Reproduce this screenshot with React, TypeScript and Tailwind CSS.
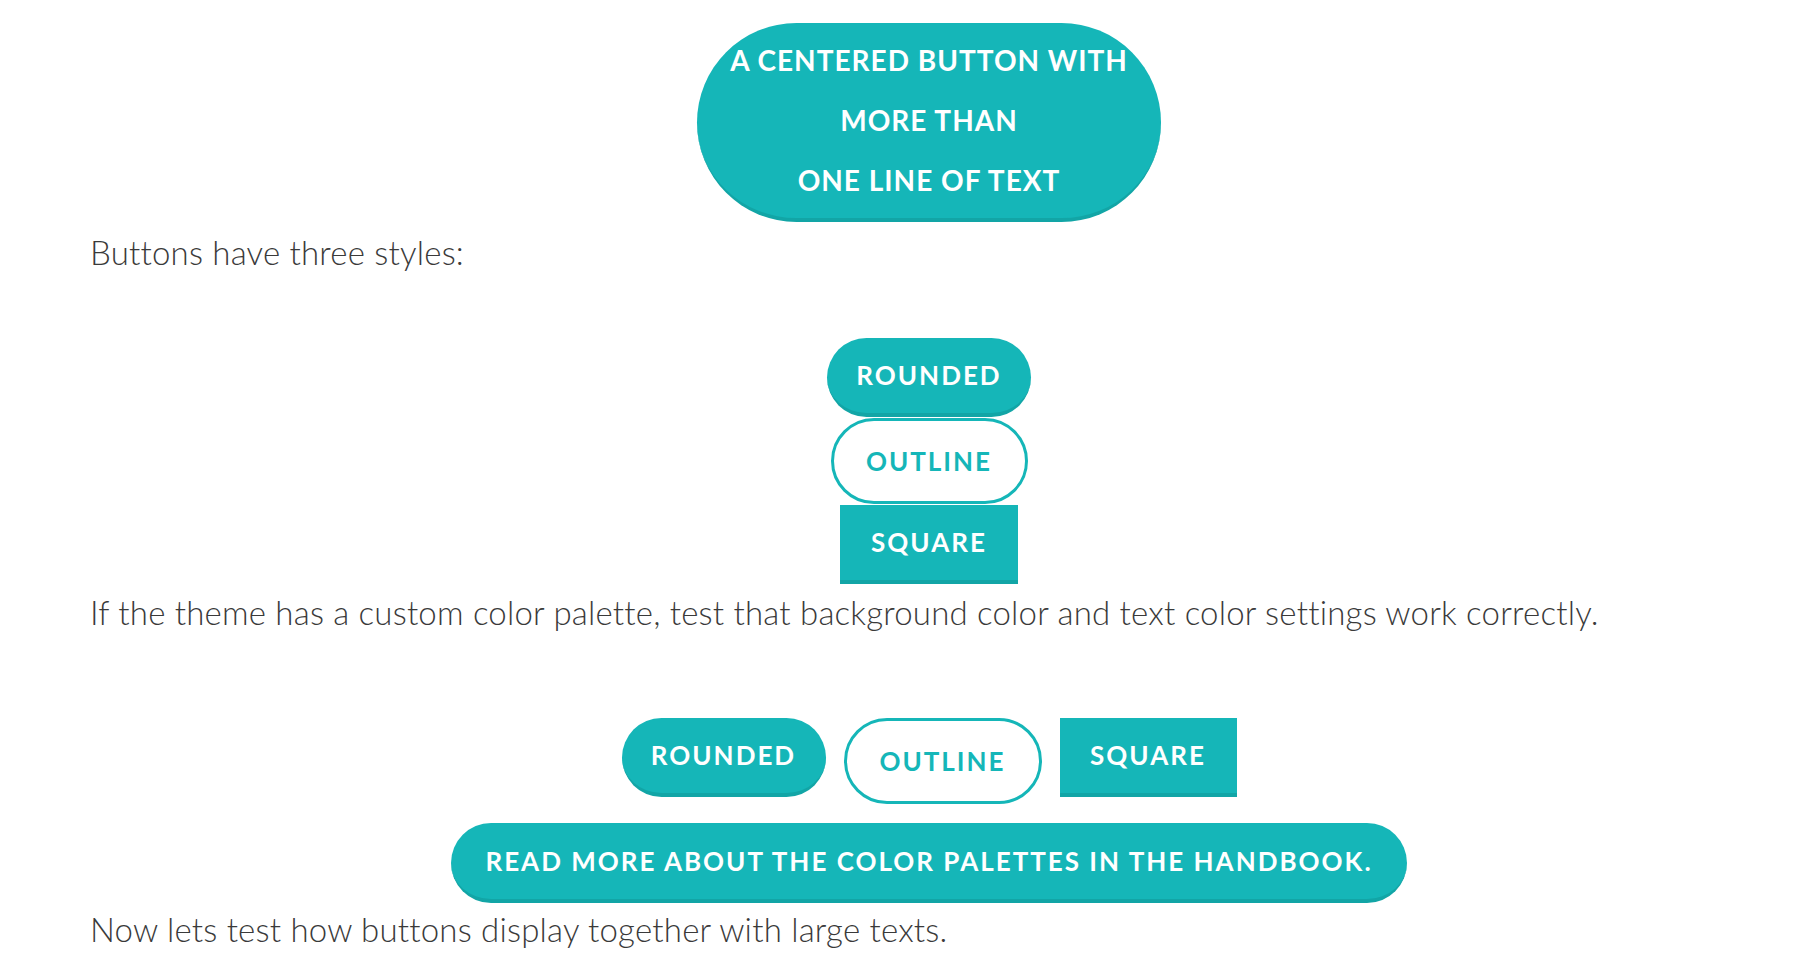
import React from "react"

const font = { fontFamily: '"Lato", "Liberation Sans", sans-serif' }

function Filled({ children, square, className = "" }: { children: React.ReactNode; square?: boolean; className?: string }) {
  return (
    <div
      className={`flex items-center justify-center bg-[#15b6b8] border-b-4 border-[#12a5a6] text-white font-bold text-[26px] tracking-[2px] ${square ? "" : "rounded-full"} ${className}`}
    >
      {children}
    </div>
  )
}

function Outline({ className = "" }: { className?: string }) {
  return (
    <div
      className={`flex items-center justify-center bg-white border-[3px] border-[#15b6b8] rounded-full text-[#15b6b8] font-bold text-[26px] tracking-[2px] ${className}`}
    >
      OUTLINE
    </div>
  )
}

export default function App() {
  return (
    <div className="min-h-[970px] bg-white pt-[23px] pl-[90px] pr-[38px] text-[#3a3a3a]" style={font}>
      <div className="flex justify-center">
        <div className="w-[464px] h-[199px] rounded-full bg-[#15b6b8] border-b-4 border-[#12a5a6] pt-[7px] text-white font-bold text-[28px] tracking-[1px] leading-[60px] text-center">
          <div>A CENTERED BUTTON WITH</div>
          <div>MORE THAN</div>
          <div>ONE LINE OF TEXT</div>
        </div>
      </div>

      <p className="mt-[6px] text-[33px] font-light leading-[48px] tracking-[0.2px]">Buttons have three styles:</p>

      <div className="mt-[62px] flex flex-col items-center">
        <Filled className="w-[204px] h-[79px]">ROUNDED</Filled>
        <Outline className="mt-px w-[197px] h-[86px]" />
        <Filled square className="mt-px w-[178px] h-[79px]">SQUARE</Filled>
      </div>

      <p className="mt-[4px] text-[33px] font-light leading-[48px] tracking-[0.2px]">
        If the theme has a custom color palette, test that background color and text color settings work correctly.
      </p>

      <div className="mt-[82px] flex justify-center items-start gap-[18px]">
        <Filled className="w-[204px] h-[79px]">ROUNDED</Filled>
        <Outline className="w-[198px] h-[86px]" />
        <Filled square className="w-[177px] h-[79px]">SQUARE</Filled>
      </div>

      <div className="mt-[19px] flex justify-center">
        <Filled className="w-[956px] h-[80px]">READ MORE ABOUT THE COLOR PALETTES IN THE HANDBOOK.</Filled>
      </div>

      <p className="mt-[2px] text-[33px] font-light leading-[48px] tracking-[0.2px]">Now lets test how buttons display together with large texts.</p>
    </div>
  )
}
